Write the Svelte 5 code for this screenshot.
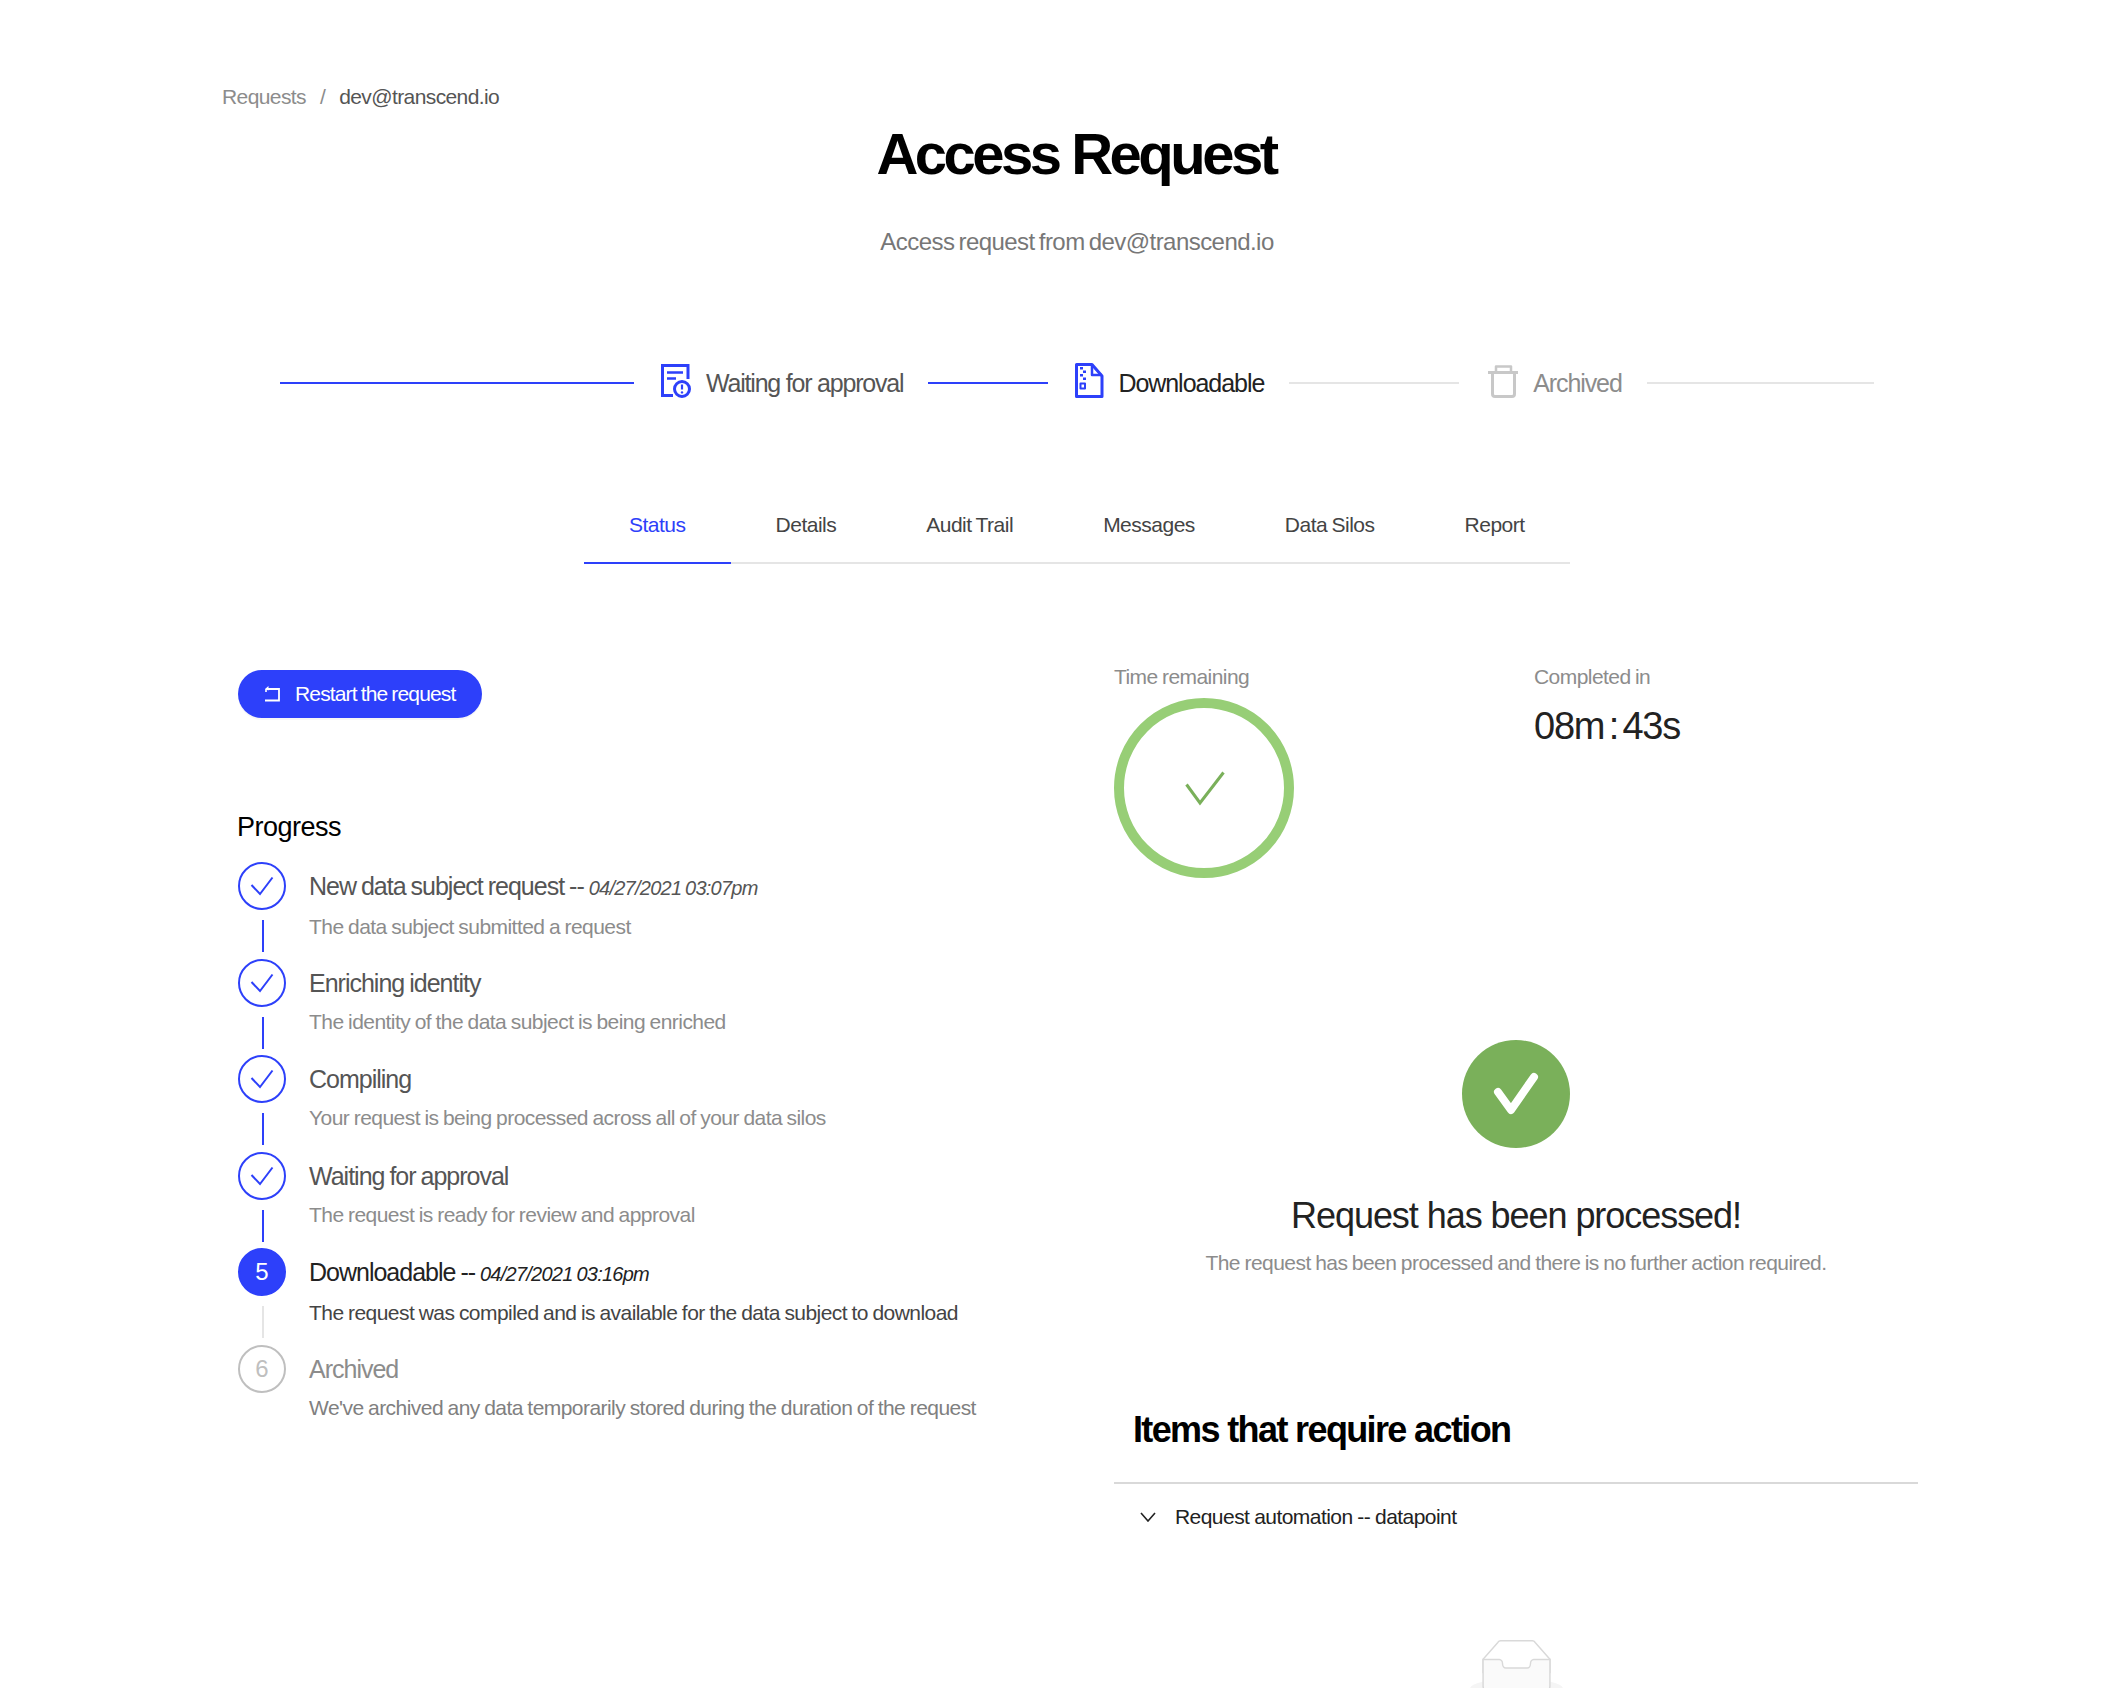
<script lang="ts">
  const tabs = ["Status", "Details", "Audit Trail", "Messages", "Data Silos", "Report"];

  const steps = [
    { title: "New data subject request", date: "04/27/2021 03:07pm", sub: "The data subject submitted a request", state: "done", num: 1 },
    { title: "Enriching identity", sub: "The identity of the data subject is being enriched", state: "done", num: 2 },
    { title: "Compiling", sub: "Your request is being processed across all of your data silos", state: "done", num: 3 },
    { title: "Waiting for approval", sub: "The request is ready for review and approval", state: "done", num: 4 },
    { title: "Downloadable", date: "04/27/2021 03:16pm", sub: "The request was compiled and is available for the data subject to download", state: "active", num: 5 },
    { title: "Archived", sub: "We've archived any data temporarily stored during the duration of the request", state: "todo", num: 6 },
  ];
</script>

<div class="page">
  <nav class="crumbs">
    <span class="crumb-root">Requests</span>
    <span class="crumb-sep">/</span>
    <span class="crumb-cur">dev@transcend.io</span>
  </nav>

  <h1>Access Request</h1>
  <p class="subtitle">Access request from dev@transcend.io</p>

  <div class="stepper">
    <span class="line blue l1"></span>
    <div class="stage wait">
      <svg width="32" height="37" viewBox="0 0 32 37" fill="none" stroke="#2d40fa" stroke-width="3">
        <path d="M13 33.5H2.5V3.5H28V17" />
        <path d="M7 10.5H23M7 16.5H16" stroke-width="2.5" />
        <circle cx="22" cy="27" r="7.5" fill="#fff" />
        <path d="M22 22.5V27.5" stroke-width="2.2" />
        <circle cx="22" cy="30.4" r="1.2" fill="#2d40fa" stroke="none" />
      </svg>
      <span>Waiting for approval</span>
    </div>
    <span class="line blue l2"></span>
    <div class="stage now">
      <svg width="30" height="37" viewBox="0 0 30 37" fill="none" stroke="#2d40fa" stroke-width="3" stroke-linejoin="round">
        <path d="M2.5 2.5H18L28 14V34.5H2.5Z" />
        <path d="M18 2.5V13H28" stroke-width="2.5" />
        <path d="M6 5h3v2.5H6zM9 8.5h3V11H9zM6 12h3v2.5H6zM9 15.5h3V18H9z" fill="#2d40fa" stroke="none" />
        <rect x="6.5" y="21.5" width="4.5" height="5" stroke-width="2" />
      </svg>
      <span>Downloadable</span>
    </div>
    <span class="line grey l3"></span>
    <div class="stage later">
      <svg width="32" height="34" viewBox="0 0 32 34" fill="none" stroke="#c8c8c8" stroke-width="3" stroke-linejoin="round">
        <path d="M1 8.5H31" />
        <path d="M9 8V2.5H24V8" stroke-width="2.5" />
        <path d="M5.5 9V30a2.5 2.5 0 0 0 2.5 2.5H25a2.5 2.5 0 0 0 2.5-2.5V9" />
      </svg>
      <span>Archived</span>
    </div>
    <span class="line grey l4"></span>
  </div>

  <div class="tabs">
    {#each tabs as tab, i}
      <div class="tab" class:selected={i === 0}>{tab}</div>
    {/each}
  </div>

  <div class="columns">
    <section class="left">
      <button class="restart">
        <svg width="18" height="18" viewBox="0 0 18 18" fill="none" stroke="#fff" stroke-width="1.8">
          <path d="M3 4H16V15.5H2" />
          <path d="M5.5 1L2 4l3.5 1.5V1z" fill="#fff" stroke="none" />
          <path d="M3 4V7" stroke-width="1.6" />
        </svg>
        Restart the request
      </button>

      <h2>Progress</h2>

      <ol class="steps">
        {#each steps as step, i}
          <li class="step {step.state}">
            <div class="marker">
              {#if step.state === "done"}
                <span class="dot">
                  <svg width="48" height="48" viewBox="0 0 48 48" fill="none" stroke="#2d40fa" stroke-width="2">
                    <path d="M13.5 23L22 32L34.5 15.5" />
                  </svg>
                </span>
              {:else}
                <span class="dot num">{step.num}</span>
              {/if}
              {#if i < steps.length - 1}
                <span class="link"></span>
              {/if}
            </div>
            <div class="body">
              <div class="step-title">
                {step.title}{#if step.date}{" -- "}<em>{step.date}</em>{/if}
              </div>
              <div class="step-sub">{step.sub}</div>
            </div>
          </li>
        {/each}
      </ol>
    </section>

    <section class="right">
      <div class="timers">
        <div class="timer-a">
          <div class="label">Time remaining</div>
          <svg class="ring" width="180" height="180" viewBox="0 0 180 180" fill="none">
            <circle cx="90" cy="90" r="85" stroke="#97ce76" stroke-width="10" />
            <path d="M72.5 86.5L86 105L109.5 74.5" stroke="#7ab05a" stroke-width="3" />
          </svg>
        </div>
        <div class="timer-b">
          <div class="label">Completed in</div>
          <div class="elapsed">08m : 43s</div>
        </div>
      </div>

      <div class="done-box">
        <svg width="108" height="108" viewBox="0 0 108 108" fill="none">
          <circle cx="54" cy="54" r="54" fill="#7ab05a" />
          <path d="M36 52L49 70L72 37" stroke="#fff" stroke-width="8" stroke-linejoin="round" stroke-linecap="round" />
        </svg>
        <h3>Request has been processed!</h3>
        <p>The request has been processed and there is no further action required.</p>
      </div>

      <h2 class="items-title">Items that require action</h2>
      <div class="items-row">
        <svg width="16" height="10" viewBox="0 0 16 10" fill="none" stroke="#222" stroke-width="1.6">
          <path d="M1 1L8 9L15 1" />
        </svg>
        <span>Request automation -- datapoint</span>
      </div>

      <div class="empty">
        <svg width="93" height="60" viewBox="0 0 64 41">
          <g transform="translate(0 1)" fill="none" fill-rule="evenodd">
            <ellipse fill="#f5f5f5" cx="32" cy="33" rx="32" ry="7" />
            <g fill-rule="nonzero" stroke="#d9d9d9">
              <path d="M55 12.76L44.854 1.258C44.367.474 43.656 0 42.907 0H21.093c-.749 0-1.46.474-1.947 1.257L9 12.761V22h46v-9.24z" />
              <path d="M41.613 15.931c0-1.605.994-2.93 2.227-2.931H55v18.137C55 33.26 53.68 35 52.05 35h-40.1C10.32 35 9 33.259 9 31.137V13h11.16c1.233 0 2.227 1.323 2.227 2.928v.022c0 1.605 1.005 2.901 2.237 2.901h14.752c1.232 0 2.237-1.308 2.237-2.913v-.007z" fill="#fafafa" />
            </g>
          </g>
        </svg>
      </div>
    </section>
  </div>
</div>

<style>
  :global(body) {
    margin: 0;
    background: #fff;
  }

  .page {
    height: 1688px;
    overflow: hidden;
    font-family: "Liberation Sans", Arial, sans-serif;
    color: #222;
    box-sizing: border-box;
    padding-top: 83px;
  }

  .crumbs {
    display: flex;
    gap: 14px;
    padding-left: 222px;
    font-size: 21px;
    line-height: 28px;
    letter-spacing: -0.6px;
    color: #8c8c8c;
  }

  .crumb-cur {
    color: #555;
  }

  h1 {
    margin: 11px 0 0;
    padding-left: 50px;
    text-align: center;
    font-size: 58px;
    line-height: 64px;
    font-weight: 700;
    letter-spacing: -3.5px;
    color: #000;
  }

  .subtitle {
    margin: 40px 0 0;
    padding-left: 52px;
    text-align: center;
    font-size: 24px;
    line-height: 32px;
    letter-spacing: -0.55px;
    word-spacing: -2px;
    color: #777;
  }

  .stepper {
    display: flex;
    align-items: center;
    margin-top: 105px;
    padding-left: 280px;
    height: 40px;
    font-size: 25px;
    letter-spacing: -1.15px;
  }

  .line {
    height: 2px;
    display: block;
  }

  .line.blue {
    background: #2d40fa;
  }

  .line.grey {
    background: #e5e5e5;
  }

  .l1 { width: 354px; }
  .l2 { width: 120px; }
  .l3 { width: 170px; }
  .l4 { width: 227px; }

  .stage {
    display: flex;
    align-items: center;
    gap: 14px;
    padding: 0 25px 0 26px;
  }

  .stage svg {
    margin-bottom: 5px;
  }

  .stage.wait { color: #555; letter-spacing: -1.2px; }
  .stage.now { color: #222; letter-spacing: -1.05px; }
  .stage.later { color: #8c8c8c; padding-left: 28px; letter-spacing: -1.1px; }

  .tabs {
    display: flex;
    width: 986px;
    margin: 79px 0 0 584px;
    border-bottom: 2px solid #e5e5e5;
    font-size: 21px;
    letter-spacing: -0.5px;
    word-spacing: -1px;
    color: #444;
  }

  .tab {
    flex: none;
    padding: 0 45px;
    line-height: 86px;
    height: 80px;
    white-space: nowrap;
    margin-bottom: -2px;
    border-bottom: 2px solid transparent;
  }

  .tab.selected {
    color: #2d40fa;
    border-bottom-color: #2d40fa;
  }

  .columns {
    display: grid;
    grid-template-columns: 876px 804px;
    margin: 106px 0 0 238px;
  }

  .restart {
    display: flex;
    align-items: center;
    gap: 14px;
    width: 244px;
    height: 48px;
    padding: 0 0 0 25px;
    border: none;
    border-radius: 24px;
    background: #2d40fa;
    box-shadow: 0 2px 0 rgba(0, 0, 0, 0.03);
    color: #fff;
    font: inherit;
    font-size: 21px;
    letter-spacing: -0.85px;
    word-spacing: -1px;
  }

  .left h2 {
    margin: 93px 0 0 -1px;
    font-size: 27px;
    line-height: 32px;
    font-weight: 400;
    letter-spacing: -0.5px;
    color: #000;
  }

  .steps {
    list-style: none;
    margin: 19px 0 0;
    padding: 0;
  }

  .step {
    display: flex;
    gap: 23px;
    height: 96.6px;
  }

  .marker {
    display: flex;
    flex-direction: column;
    align-items: center;
    width: 48px;
  }

  .dot {
    display: flex;
    align-items: center;
    justify-content: center;
    width: 48px;
    height: 48px;
    box-sizing: border-box;
    border: 2px solid #2d40fa;
    border-radius: 50%;
    flex: none;
  }

  .dot svg {
    flex: none;
    margin: -2px;
  }

  .num {
    font-size: 24px;
  }

  .link {
    width: 2px;
    height: 32px;
    margin-top: 10px;
    margin-left: 2px;
    background: #2d40fa;
  }

  .active .dot {
    background: #2d40fa;
    color: #fff;
  }

  .active .link {
    background: #e5e5e5;
  }

  .todo .dot {
    border-color: #bfbfbf;
    color: #bfbfbf;
  }

  .body {
    padding-top: 9px;
  }

  .step-title {
    font-size: 25px;
    line-height: 30px;
    letter-spacing: -1px;
    word-spacing: -1px;
    color: #555;
  }

  .step-title em {
    font-size: 20px;
    letter-spacing: -0.75px;
  }

  .step-sub {
    margin-top: 10px;
    font-size: 21px;
    line-height: 28px;
    letter-spacing: -0.55px;
    word-spacing: -0.8px;
    color: #8c8c8c;
  }

  .active .step-title {
    color: #222;
  }

  .active .step-sub {
    color: #444;
  }

  .todo .step-title {
    color: #8c8c8c;
  }

  .todo .step-sub {
    color: #808080;
  }

  .right {
    margin-top: -7px;
  }

  .timers {
    display: flex;
    height: 264px;
  }

  .timer-a {
    width: 420px;
  }

  .label {
    font-size: 21px;
    line-height: 28px;
    letter-spacing: -0.55px;
    word-spacing: -1px;
    color: #8c8c8c;
  }

  .ring {
    display: block;
    margin-top: 7px;
  }

  .elapsed {
    margin-top: 12px;
    font-size: 38px;
    line-height: 46px;
    letter-spacing: -1.2px;
    word-spacing: -5px;
    color: #222;
  }

  .done-box {
    display: flex;
    flex-direction: column;
    align-items: center;
    margin-top: 113px;
  }

  .done-box svg {
    display: block;
  }

  h3 {
    margin: 45px 0 0;
    font-size: 36px;
    line-height: 46px;
    font-weight: 400;
    letter-spacing: -1.05px;
    color: #222;
  }

  .done-box p {
    margin: 9px 0 0;
    font-size: 21px;
    line-height: 30px;
    letter-spacing: -0.55px;
    word-spacing: -0.8px;
    color: #8c8c8c;
  }

  .items-title {
    margin: 131px 0 0;
    padding: 0 19px 31px;
    border-bottom: 2px solid #d9d9d9;
    font-size: 36px;
    line-height: 42px;
    font-weight: 700;
    letter-spacing: -1.63px;
    color: #000;
  }

  .items-row {
    display: flex;
    align-items: center;
    gap: 19px;
    padding: 19px 0 0 26px;
    font-size: 21px;
    line-height: 28px;
    letter-spacing: -0.55px;
    word-spacing: -0.5px;
    color: #222;
  }

  .empty {
    display: flex;
    justify-content: center;
    margin-top: 108px;
  }
</style>
